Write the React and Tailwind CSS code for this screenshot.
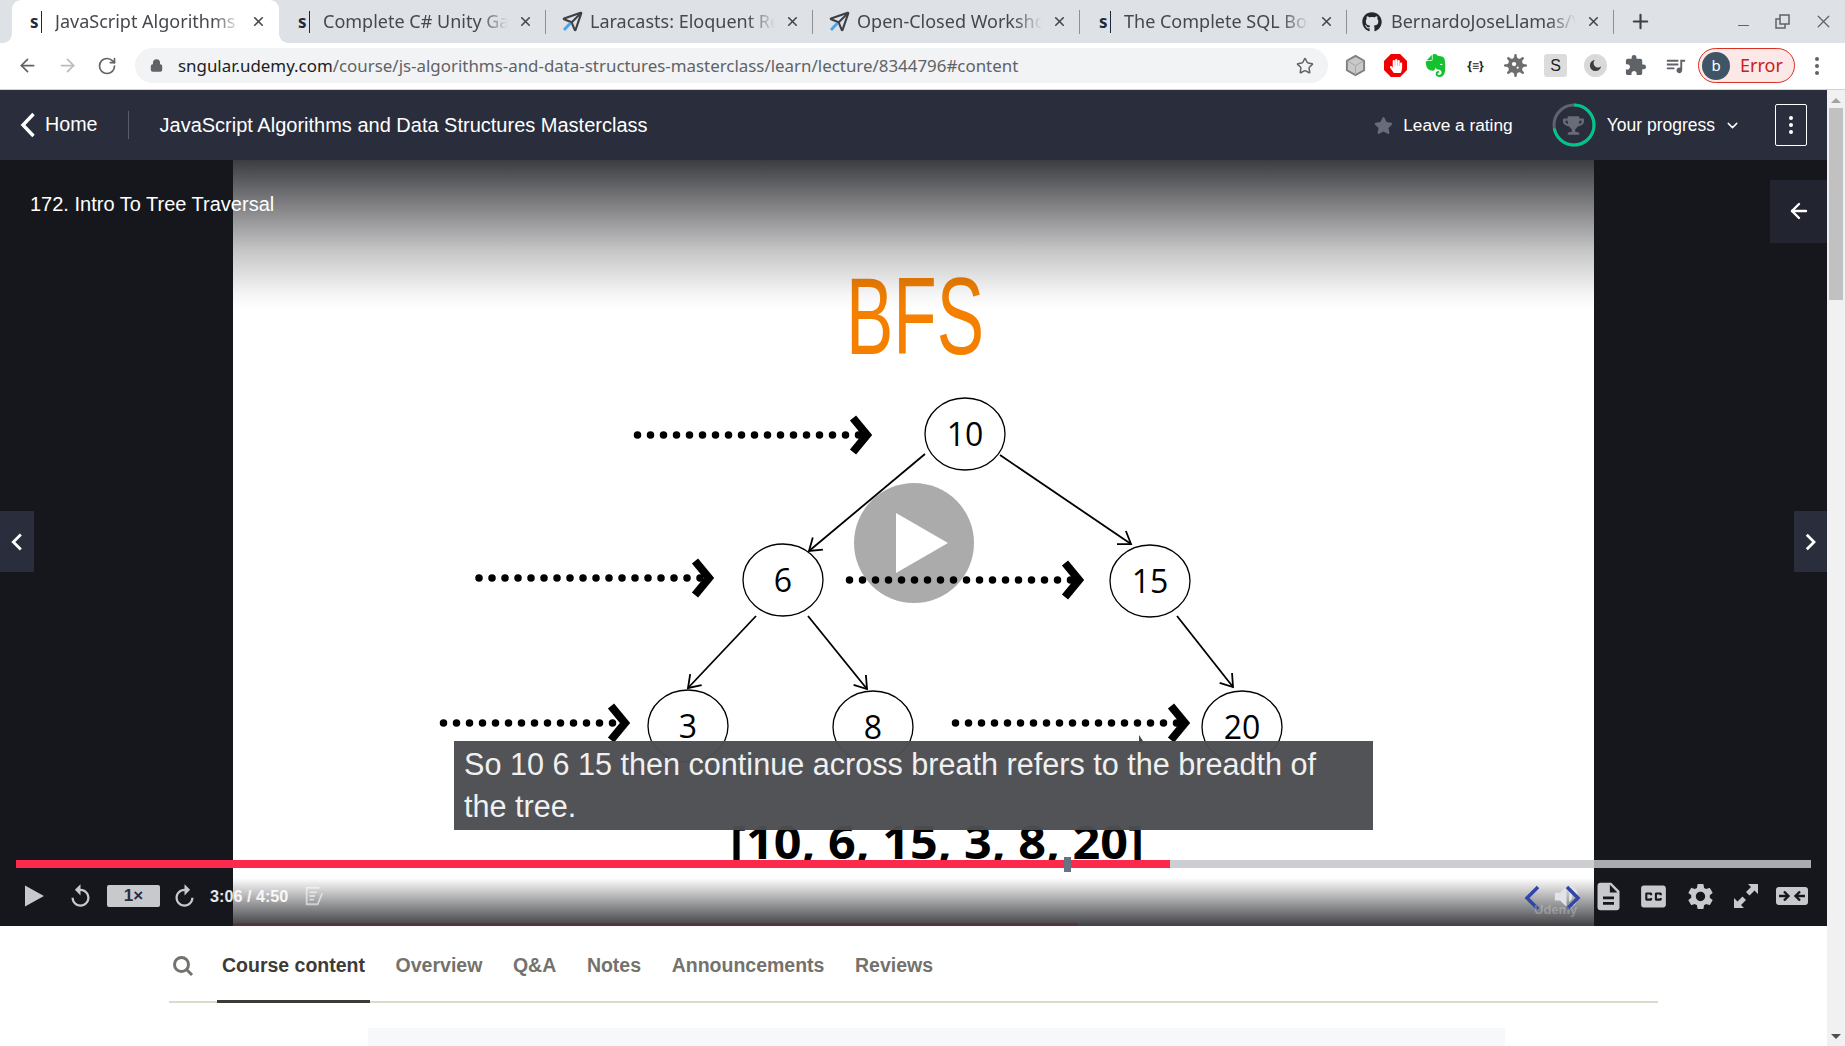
import React from 'react';
import { ArrowLeft, ArrowRight, RotateCw, Lock, Star, X, Plus, Minus, ChevronDown, Send } from 'lucide-react';
import { FaGithub, FaHandPaper, FaVirus, FaTrophy, FaStar } from 'react-icons/fa';
import { SiEvernote } from 'react-icons/si';
import { MdExtension, MdQueueMusic, MdDescription, MdClosedCaption, MdSettings, MdVolumeUp, MdReplay, MdChevronLeft, MdChevronRight } from 'react-icons/md';

const tabs = [
  { title: 'JavaScript Algorithms and Data', icon: 's', active: true },
  { title: 'Complete C# Unity Game Dev', icon: 's' },
  { title: 'Laracasts: Eloquent Relationships', icon: 'plane' },
  { title: 'Open-Closed Workshop Lesson', icon: 'plane' },
  { title: 'The Complete SQL Bootcamp', icon: 's' },
  { title: 'BernardoJoseLlamas/Vue-Practice', icon: 'github' },
];

const courseTabs = ['Overview', 'Q&A', 'Notes', 'Announcements', 'Reviews'];

function Favicon({ type }) {
  if (type === 's') {
    return (
      <span className="flex w-[20px] shrink-0 items-center">
        <span className="text-[17px] leading-none font-bold text-[#1e2a3a]">s</span>
        <span className="ml-[2px] h-[22px] w-px bg-[#1e2a3a]" />
      </span>
    );
  }
  if (type === 'plane') {
    return (
      <span className="relative -ml-[3px] flex w-[23px] shrink-0 items-center">
        <Send size={21} strokeWidth={2.4} color="#3c4043" />
        <svg className="absolute top-0 left-0" width="21" height="21" viewBox="0 0 21 21">
          <path d="M2 19 L8.500 12" stroke="#4aa3ea" strokeWidth="2.8" />
        </svg>
      </span>
    );
  }
  return (
    <span className="-ml-[4px] w-[24px] shrink-0">
      <FaGithub size={20} color="#24292e" />
    </span>
  );
}

function BrowserTab({ tab }) {
  return (
    <div className={`relative flex h-[43px] w-[267px] shrink-0 items-center pr-[13px] ${tab.active ? 'rounded-t-[9px] bg-white pl-[18px]' : 'pl-[19px]'}`}>
      {tab.active && (
        <>
          <span className="absolute bottom-0 -left-[9px] h-[9px] w-[9px] bg-[radial-gradient(circle_at_0_0,transparent_8.5px,white_9px)]" />
          <span className="absolute -right-[9px] bottom-0 h-[9px] w-[9px] bg-[radial-gradient(circle_at_100%_0,transparent_8.5px,white_9px)]" />
        </>
      )}
      <Favicon type={tab.icon} />
      <span className="ml-[5px] -mt-[2px] w-[187px] overflow-hidden text-[18px] leading-[24px] whitespace-nowrap text-[#45484c] [mask-image:linear-gradient(to_right,black_85%,transparent)]">
        {tab.title}
      </span>
      <X size={15} strokeWidth={2.6} color="#45484c" className="ml-[10px] shrink-0" />
      {!tab.active && <span className="absolute top-[10px] right-0 h-[24px] w-px bg-[#8d9095]" />}
    </div>
  );
}

function TabStrip() {
  return (
    <div className="flex h-[43px] items-center bg-[#dee1e6] pl-[12px] font-['Noto_Sans',sans-serif]">
      {tabs.map((tab) => (
        <BrowserTab key={tab.title} tab={tab} />
      ))}
      <Plus size={23} strokeWidth={2.2} color="#3c4043" className="ml-[15px]" />
      <div className="ml-auto flex items-center gap-[22px] pr-[11px]">
        <Minus size={17} strokeWidth={1.6} color="#5f6368" className="mt-[8px]" />
        <svg width="17" height="17" viewBox="0 0 17 17" fill="none" stroke="#5f6368" strokeWidth="1.5">
          <rect x="6" y="2" width="9" height="9" />
          <path d="M6 6H2v9h9v-4" />
        </svg>
        <X size={21} strokeWidth={1.5} color="#5f6368" />
      </div>
    </div>
  );
}

function ExtensionSlot({ children }) {
  return <span className="flex h-[23px] w-[23px] shrink-0 items-center justify-center">{children}</span>;
}

function Toolbar() {
  return (
    <div className="flex h-[47px] items-center border-b border-[#d2d3d6] bg-white pb-[1px] font-['Noto_Sans',sans-serif]">
      <div className="flex w-[135px] shrink-0 items-center gap-[19px] pl-[17px]">
        <ArrowLeft size={21} strokeWidth={2} color="#5f6368" />
        <ArrowRight size={21} strokeWidth={2} color="#b9bcc0" />
        <RotateCw size={20} strokeWidth={2} color="#5f6368" />
      </div>
      <div className="flex h-[35px] w-[1193px] shrink-0 items-center rounded-full bg-[#f1f3f4] pr-[14px] pl-[15px]">
        <Lock size={13} strokeWidth={3} fill="#5f6368" color="#5f6368" />
        <span className="ml-[15px] text-[16.9px] whitespace-nowrap text-[#5f6368]">
          <span className="text-[#202124]">sngular.udemy.com</span>/course/js-algorithms-and-data-structures-masterclass/learn/lecture/8344796#content
        </span>
        <Star size={18} strokeWidth={2} color="#5f6368" className="ml-auto" />
      </div>
      <div className="ml-[16px] flex items-center gap-[17px]">
        <ExtensionSlot>
          <svg width="23" height="23" viewBox="0 0 24 24" fill="#c9c9c9" stroke="#808080" strokeWidth="2">
            <path d="M12 2 21 7v10l-9 5-9-5V7z" />
            <path d="M12 12 21 7M12 12v10M12 12 3 7" stroke="#a5a5a5" strokeWidth="1" />
          </svg>
        </ExtensionSlot>
        <span className="flex h-[23px] w-[23px] items-center justify-center bg-[#f00000] [clip-path:polygon(30%_0,70%_0,100%_30%,100%_70%,70%_100%,30%_100%,0_70%,0_30%)]">
          <FaHandPaper size={14} color="white" />
        </span>
        <ExtensionSlot>
          <SiEvernote size={23} color="#14c22f" />
        </ExtensionSlot>
        <span className="w-[23px] text-center text-[12px] font-bold text-[#222]">{'{≡}'}</span>
        <ExtensionSlot>
          <FaVirus size={23} color="#6e6e6e" />
        </ExtensionSlot>
        <span className="flex h-[23px] w-[23px] items-center justify-center rounded-[3px] bg-[#dcdcdc] font-['Liberation_Sans',sans-serif] text-[16px] text-[#222]">S</span>
        <span className="flex h-[23px] w-[23px] items-center justify-center rounded-full bg-[#d9d9d9]">
          <svg width="15" height="15" viewBox="0 0 24 24" fill="#3c4043">
            <path d="M21 13A9 9 0 1 1 11 3a7 7 0 0 0 10 10z" />
          </svg>
        </span>
        <ExtensionSlot>
          <MdExtension size={25} color="#5f6368" />
        </ExtensionSlot>
        <ExtensionSlot>
          <MdQueueMusic size={25} color="#5f6368" />
        </ExtensionSlot>
      </div>
      <div className="ml-[11px] flex h-[35px] w-[97px] shrink-0 items-center rounded-full border border-[#d93025] bg-[#fce8e6] pl-[3px]">
        <span className="flex h-[28px] w-[28px] items-center justify-center rounded-full bg-[#3f5566] text-[15px] text-white">b</span>
        <span className="ml-[10px] -mt-[2px] text-[18px] leading-none text-[#c5221f]">Error</span>
      </div>
      <div className="ml-[20px] flex flex-col gap-[3px]">
        <span className="h-[4px] w-[4px] rounded-full bg-[#5f6368]" />
        <span className="h-[4px] w-[4px] rounded-full bg-[#5f6368]" />
        <span className="h-[4px] w-[4px] rounded-full bg-[#5f6368]" />
      </div>
    </div>
  );
}

function CourseHeader() {
  return (
    <div className="flex h-[70px] items-center bg-[#2a2d3b] text-white">
      <svg width="17" height="26" viewBox="0 0 17 26" fill="none" stroke="white" strokeWidth="3.4" className="ml-[19px] shrink-0">
        <path d="M14.500 2 4 13l10.500 11" />
      </svg>
      <span className="ml-[9px] text-[19.7px]">Home</span>
      <span className="mr-[31px] ml-[30px] h-[28px] w-px bg-[#5a5d69]" />
      <span className="text-[20px]">JavaScript Algorithms and Data Structures Masterclass</span>
      <FaStar size={19} color="#686b78" className="ml-auto" />
      <span className="mt-[1px] ml-[10px] text-[17.3px]">Leave a rating</span>
      <span className="relative ml-[39px] flex h-[44px] w-[44px] items-center justify-center">
        <svg className="absolute inset-0" width="44" height="44" viewBox="0 0 44 44" fill="none" strokeWidth="3">
          <circle cx="22" cy="22" r="20" stroke="#5f6270" />
          <circle cx="22" cy="22" r="20" stroke="#00c58a" strokeDasharray="90 126" transform="rotate(-90 22 22)" />
        </svg>
        <FaTrophy size={21} color="#686b78" />
      </span>
      <span className="mt-[1px] ml-[11px] text-[17.5px]">Your progress</span>
      <ChevronDown size={17} strokeWidth={2} className="ml-[9px]" />
      <span className="mr-[20px] ml-[34px] flex h-[42px] w-[32px] flex-col items-center justify-center gap-[3px] rounded-[2px] border border-white">
        <span className="h-[4px] w-[4px] rounded-full bg-white" />
        <span className="h-[4px] w-[4px] rounded-full bg-white" />
        <span className="h-[4px] w-[4px] rounded-full bg-white" />
      </span>
    </div>
  );
}

// dotted line ending in a heavy chevron, as drawn on the slide
function DotArrow({ x1, x2, y }) {
  return (
    <g>
      <line x1={x1} x2={x2} y1={y} y2={y} stroke="black" strokeWidth="7.5" strokeLinecap="round" strokeDasharray="0 13" />
      <polyline points={`${x2 - 6},${y - 17} ${x2 + 8},${y} ${x2 - 6},${y + 17}`} fill="none" stroke="black" strokeWidth="8" />
    </g>
  );
}

function TreeNode({ cx, cy, label }) {
  return (
    <g>
      <ellipse cx={cx} cy={cy} rx="40" ry="36" fill="white" stroke="black" strokeWidth="1.3" />
      <text x={cx} y={cy + 12} textAnchor="middle" fontSize="32" fontFamily="'Open Sans', sans-serif" fill="black">
        {label}
      </text>
    </g>
  );
}

function Edge({ x1, y1, x2, y2 }) {
  const a = Math.atan2(y2 - y1, x2 - x1);
  const l = 14;
  const p1 = [x2 - l * Math.cos(a - 0.6), y2 - l * Math.sin(a - 0.6)];
  const p2 = [x2 - l * Math.cos(a + 0.6), y2 - l * Math.sin(a + 0.6)];
  return (
    <g fill="none" stroke="black" strokeWidth="1.8">
      <line x1={x1} y1={y1} x2={x2} y2={y2} />
      <polyline points={`${p1[0]},${p1[1]} ${x2},${y2} ${p2[0]},${p2[1]}`} />
    </g>
  );
}

function Slide() {
  return (
    <svg className="block h-[766px] w-[1361px] shrink-0" viewBox="233 160 1361 766">
      <rect x="233" y="160" width="1361" height="766" fill="white" />
      <text x="846" y="354" fontSize="110" fontFamily="'Liberation Sans Narrow', 'Liberation Sans', sans-serif" fill="#f58000" textLength="138" lengthAdjust="spacingAndGlyphs">
        BFS
      </text>
      <Edge x1={925} y1={454} x2={809} y2={551} />
      <Edge x1={1000} y1={455} x2={1131} y2={544} />
      <Edge x1={756} y1={616} x2={688} y2={688} />
      <Edge x1={808} y1={616} x2={867} y2={689} />
      <Edge x1={1177} y1={616} x2={1233} y2={687} />
      <DotArrow x1={637.5} x2={859} y={435} />
      <DotArrow x1={479} x2={701} y={578} />
      <DotArrow x1={849.5} x2={1071} y={580} />
      <DotArrow x1={443.5} x2={617} y={723} />
      <DotArrow x1={955.5} x2={1177} y={723} />
      <TreeNode cx={965} cy={434} label="10" />
      <TreeNode cx={783} cy={580} label="6" />
      <TreeNode cx={1150} cy={581} label="15" />
      <TreeNode cx={688} cy={726} label="3" />
      <TreeNode cx={873} cy={727} label="8" />
      <TreeNode cx={1242} cy={727} label="20" />
      <clipPath id="list-clip">
        <rect x="233" y="820" width="1361" height="42" />
      </clipPath>
      <g clipPath="url(#list-clip)">
        <text x="730" y="859" fontSize="47" fontWeight="700" fontFamily="'Open Sans', sans-serif" fill="black" textLength="414" lengthAdjust="spacingAndGlyphs">
          [10, 6, 15, 3, 8, 20]
        </text>
      </g>
      <path d="M1139 735 l0 11 l3 -3 l3 1 z" fill="#444" />
    </svg>
  );
}

function VideoControls() {
  return (
    <div className="absolute top-[712px] right-0 left-0 flex h-[48px] items-center justify-between pr-[19px] pl-[22px] text-[#c8c9cc]">
      <div className="flex items-center">
        <svg width="24" height="24" viewBox="0 0 24 24" fill="#c8c9cc" className="-ml-[1px]">
          <path d="M4 1.500 23 12 4 22.500z" />
        </svg>
        <MdReplay size={27} className="ml-[22px]" />
        <span className="ml-[13px] flex h-[22px] w-[53px] items-center justify-center rounded-[2px] bg-[#c8c9cc] text-[17px] font-bold text-[#2a2d3b]">1×</span>
        <MdReplay size={27} className="ml-[11px] -scale-x-100" />
        <span className="ml-[12px] text-[16.2px] font-bold text-white/90">3:06 / 4:50</span>
        <svg width="22" height="22" viewBox="0 0 24 24" fill="none" stroke="white" strokeOpacity="0.55" strokeWidth="2" className="ml-[15px]">
          <path d="M18 3H4v18h12l5-12" />
          <path d="M7 8h8M7 12h6M7 16h5" />
        </svg>
      </div>
      <div className="flex items-center">
        <MdVolumeUp size={31} color="#e2e3e6" />
        <MdDescription size={33} className="ml-[10px]" />
        <MdClosedCaption size={33} className="ml-[12px]" />
        <MdSettings size={31} className="ml-[15px]" />
        <svg width="26" height="26" viewBox="0 0 26 26" fill="#c8c9cc" className="ml-[17px]">
          <path d="M15 1h10v10l-3.500-3.500-5 5-3.500-3.500 5-5zM1 25V15l3.500 3.500 5-5 3.500 3.500-5 5L11 25z" />
        </svg>
        <svg width="32" height="18" viewBox="0 0 32 18" className="ml-[17px]">
          <rect width="32" height="18" rx="3" fill="#c8c9cc" />
          <path d="M3 9h10M8 4.500l4.500 4.500L8 13.500M29 9H19M24 4.500 19.500 9l4.500 4.500" fill="none" stroke="#16171c" strokeWidth="2.4" />
        </svg>
      </div>
    </div>
  );
}

function VideoPlayer() {
  return (
    <div className="relative flex h-[766px] overflow-hidden bg-[#16171c]">
      <div className="w-[233px] shrink-0" />
      <Slide />
      <div className="flex-1" />

      {/* top and bottom fades over the slide */}
      <div className="absolute top-0 right-[233px] left-[233px] h-[150px] bg-[linear-gradient(to_bottom,rgba(22,23,28,0.84),rgba(22,23,28,0.32)_53%,rgba(22,23,28,0.25)_60%,rgba(22,23,28,0.04)_90%,transparent)]" />
      <div className="absolute top-[718px] right-[233px] left-[233px] h-[48px] bg-linear-to-b from-transparent to-[rgba(22,23,28,0.82)]" />
      <div className="absolute top-[763px] left-[233px] h-[3px] w-[845px] bg-[rgba(120,10,40,0.3)]" />

      <span className="absolute top-[31px] left-[30px] text-[20px] leading-[26px] text-white">172. Intro To Tree Traversal</span>

      {/* big play button */}
      <div className="absolute top-[323px] left-[854px] flex h-[120px] w-[120px] items-center justify-center rounded-full bg-black/33">
        <svg width="52" height="60" viewBox="0 0 52 60" fill="white" className="ml-[16px]">
          <path d="M0 0 52 30 0 60z" />
        </svg>
      </div>

      <div className="absolute top-[351px] left-0 flex h-[61px] w-[34px] items-center justify-center bg-[#2a2d3b] text-white">
        <MdChevronLeft size={40} />
      </div>
      <div className="absolute top-[351px] right-0 flex h-[61px] w-[33px] items-center justify-center bg-[#2a2d3b] text-white">
        <MdChevronRight size={40} />
      </div>
      <div className="absolute top-[20px] right-0 flex h-[63px] w-[57px] items-center justify-center bg-[#22242f] text-white">
        <ArrowLeft size={24} strokeWidth={2.4} className="-mt-[2px]" />
      </div>

      {/* captions */}
      <div className="absolute top-[581px] left-[454px] w-[919px] bg-[rgba(76,77,82,0.97)] px-[10px] pt-[1.5px] pb-[3.5px] text-[30.6px] leading-[42px] text-[#f0f0f0]">
        So 10 6 15 then continue across breath refers to the breadth of the tree.
      </div>

      {/* progress */}
      <div className="absolute top-[700px] left-[16px] h-[8px] w-[1795px] bg-[rgba(196,197,201,0.85)]">
        <div className="h-full w-[1154px] bg-[#fb2a4d]" />
        <span className="absolute -top-[3px] left-[1048px] h-[15px] w-[7px] bg-[#6a7180]" />
      </div>

      <VideoControls />

      {/* extension chevrons and watermark sit on top of the controls */}
      <svg className="absolute top-[724px] left-[1522px]" width="62" height="28" viewBox="0 0 62 28" fill="none" stroke="#3047a8" strokeWidth="3.5">
        <path d="M16 3 5 14l11 11" />
        <path d="M45 3l11 11-11 11" />
      </svg>
      <span className="absolute top-[740px] left-[1534px] text-[13px] font-bold text-white/25">Udemy</span>
    </div>
  );
}

function CourseTabs() {
  return (
    <div className="bg-white">
      <div className="mx-[169px] flex h-[77px] items-end border-b-2 border-[#dcdacb]">
        <div className="flex h-[77px] w-[48px] items-center justify-start pt-[7px] pl-[3px]">
          <svg width="22" height="22" viewBox="0 0 22 22" fill="none" stroke="#73726c" strokeWidth="3">
            <circle cx="9.500" cy="9.500" r="7" />
            <path d="M14.500 14.500 20 20" />
          </svg>
        </div>
        <div className="-mb-[2px] flex h-[79px] items-center border-b-[3px] border-[#3c3b37] px-[5px] pt-[7px] text-[19.5px] font-bold text-[#3c3b37]">Course content</div>
        <div className="flex gap-[20.6px] pl-[20.6px]">
          {courseTabs.map((name) => (
            <span key={name} className="flex h-[77px] items-center px-[5px] pt-[7px] text-[19.5px] font-bold text-[#73726c]">
              {name}
            </span>
          ))}
        </div>
      </div>
      <div className="mt-[25px] ml-[368px] h-[20px] w-[1137px] bg-[#f7f8fa]" />
    </div>
  );
}

function Scrollbar() {
  return (
    <div className="flex w-[18px] shrink-0 flex-col items-center bg-[#f1f1f1]">
      <span className="mt-[8px] h-0 w-0 border-x-[5px] border-b-[5px] border-x-transparent border-b-[#a3a3a3]" />
      <span className="mt-[5px] h-[192px] w-[14px] bg-[#c1c1c1]" />
      <span className="mt-auto mb-[7px] h-0 w-0 border-x-[5px] border-t-[5px] border-x-transparent border-t-[#505050]" />
    </div>
  );
}

export default function App() {
  return (
    <div className="h-[1046px] w-[1845px] overflow-hidden bg-white font-['Liberation_Sans',sans-serif]">
      <TabStrip />
      <Toolbar />
      <div className="flex h-[956px]">
        <div className="w-[1827px] shrink-0 overflow-hidden">
          <CourseHeader />
          <VideoPlayer />
          <CourseTabs />
        </div>
        <Scrollbar />
      </div>
    </div>
  );
}
